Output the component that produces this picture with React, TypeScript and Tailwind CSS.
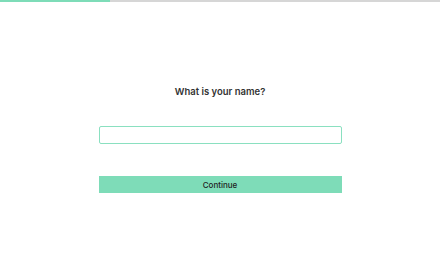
import React from "react";

export default function App() {
  return (
    <div className="w-[440px] h-[275px] bg-white flex flex-col" style={{ fontFamily: "Inter, 'Open Sans', sans-serif" }}>
      <div className="h-[2px] w-full bg-[#d6d6d6] flex">
        <div className="h-full w-[25%] bg-[#7edcb8]" />
      </div>
      <div className="flex flex-col items-center">
        <h1 className="mt-[83px] text-[9.5px] font-semibold text-[#333] leading-[14px]">What is your name?</h1>
        <div className="mt-[27px] w-[243px] h-[18px] border border-solid border-[#8ae0c0] rounded-[2px]" />
        <button className="mt-[32px] w-[243px] h-[17px] bg-[#7edcb8] text-[8px] font-medium text-[#222]">Continue</button>
      </div>
    </div>
  );
}
